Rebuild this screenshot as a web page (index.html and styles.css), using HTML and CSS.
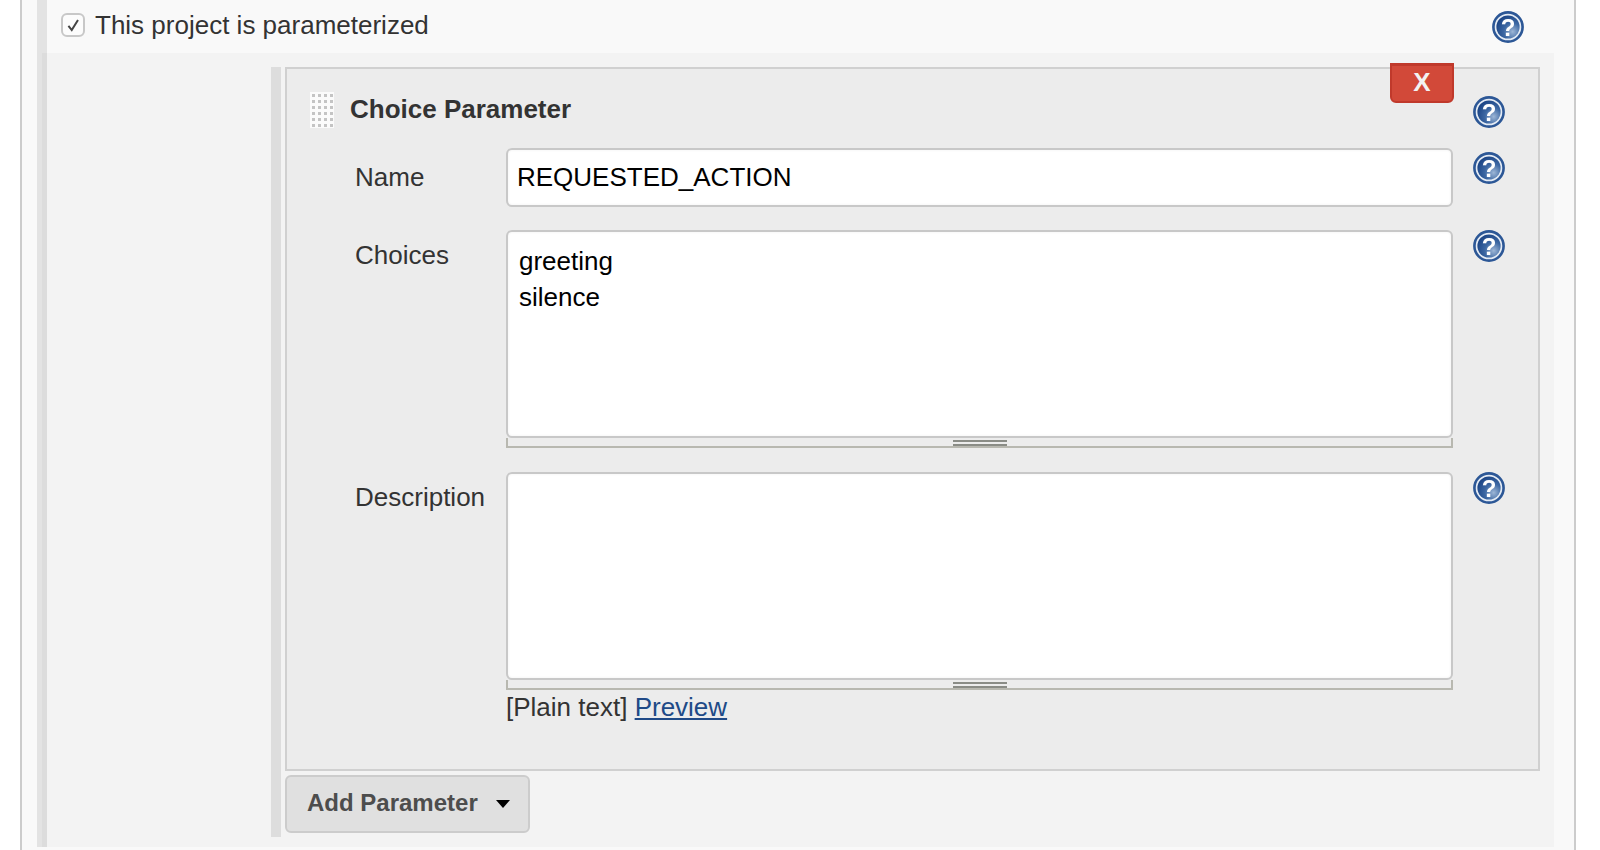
FILE: index.html
```html
<!DOCTYPE html>
<html>
<head>
  <title>Job configuration</title>
  <link rel="stylesheet" href="styles.css">
</head>
<body>
  <svg class="defs" width="0" height="0">
    <defs>
      <radialGradient id="help-fill" cx="0.7" cy="0.7" r="0.75">
        <stop offset="0" stop-color="#9db6d6"/>
        <stop offset="0.5" stop-color="#3d68a3"/>
        <stop offset="1" stop-color="#1c4586"/>
      </radialGradient>
      <symbol id="help" viewBox="0 0 32 32">
        <circle cx="16" cy="16" r="14.6" fill="#e4ebf4" stroke="#2c5796" stroke-width="2.6"/>
        <circle cx="16" cy="16" r="11.6" fill="url(#help-fill)"/>
        <text x="16" y="24.5" text-anchor="middle" class="help-mark">?</text>
      </symbol>
    </defs>
  </svg>

  <div class="page">
    <div class="section">
      <div class="option">
        <label class="option-label">
          <span class="checkbox">
            <svg viewBox="0 0 24 24" width="24" height="24"><path d="M6.5 13 L10.5 18 L18 6" fill="none" stroke="#444" stroke-width="2.4"/></svg>
          </span>
          This project is parameterized
        </label>
        <svg class="help-icon"><use href="#help"/></svg>
      </div>

      <div class="nested">
        <div class="param-list">
          <div class="panel">
            <button class="delete-btn">X</button>

            <div class="panel-head">
              <span class="drag-handle"></span>
              <span class="panel-title">Choice Parameter</span>
              <svg class="help-icon head-help"><use href="#help"/></svg>
            </div>

            <div class="form-row name-row">
              <label class="field-label">Name</label>
              <input class="text-input" type="text" value="REQUESTED_ACTION">
              <svg class="help-icon name-help"><use href="#help"/></svg>
            </div>

            <div class="form-row choices-row">
              <label class="field-label">Choices</label>
              <div class="area-wrap">
                <textarea class="text-area">greeting
silence</textarea>
                <div class="grip"><span class="grip-lines"></span></div>
              </div>
              <svg class="help-icon"><use href="#help"/></svg>
            </div>

            <div class="form-row">
              <label class="field-label">Description</label>
              <div class="area-wrap">
                <textarea class="text-area"></textarea>
                <div class="grip"><span class="grip-lines"></span></div>
                <div class="format-note">[Plain text] <a href="#">Preview</a></div>
              </div>
              <svg class="help-icon"><use href="#help"/></svg>
            </div>
          </div>

          <button class="add-btn">Add Parameter <span class="caret"></span></button>
        </div>
      </div>
    </div>
  </div>
</body>
</html>
```

FILE: styles.css
```css
html, body {
  margin: 0;
  height: 850px;
  overflow: hidden;
  background: #fff;
  font-family: "Liberation Sans", Arial, sans-serif;
  font-size: 26px;
  color: #333;
}
.defs {
  display: block;
  height: 0;
}
.help-mark {
  font-family: "Liberation Sans", Arial, sans-serif;
  font-weight: bold;
  font-size: 24px;
  fill: #fff;
}
.page {
  width: 1537px;
  height: 850px;
  margin-left: 20px;
  padding-left: 15px;
  border-left: 2px solid #ccc;
  border-right: 2px solid #ccc;
  background: #f9f9f9;
}
.section {
  width: 1507px;
  height: 847px;
  border-left: 10px solid #e3e3e3;
}
.option {
  display: flex;
  height: 53px;
  padding-left: 14px;
  padding-right: 30px;
  align-items: center;
  justify-content: space-between;
}
.option-label {
  display: flex;
  align-self: flex-start;
  align-items: center;
  gap: 10px;
  height: 48px;
  padding-top: 1px;
}
.checkbox {
  display: flex;
  box-sizing: border-box;
  width: 24px;
  height: 24px;
  border: 2px solid #c8c8c8;
  border-radius: 6px;
  background: #fcfcfc;
  align-items: center;
  justify-content: center;
}
.help-icon {
  display: block;
  width: 32px;
  height: 32px;
  flex: none;
  filter: blur(0.4px);
}
.nested {
  height: 780px;
  margin-left: -5px;
  padding: 14px 0 0 224px;
  border-left: 5px solid #dcdcdc;
  background: #f3f3f3;
}
.param-list {
  height: 770px;
  padding-left: 4px;
  border-left: 10px solid #ddd;
}
.panel {
  position: relative;
  width: 1251px;
  height: 700px;
  border: 2px solid #d0d0d0;
  background: #ececec;
}
.delete-btn {
  position: absolute;
  top: -6px;
  right: 84px;
  width: 64px;
  height: 40px;
  padding: 0 0 2px;
  border: 2px solid #c0392b;
  border-top-width: 3px;
  border-radius: 0 0 6px 6px;
  background: #d24939;
  color: #f2f2f2;
  font-family: inherit;
  font-size: 26px;
  font-weight: bold;
}
.panel-head {
  display: flex;
  align-items: center;
  height: 36px;
  padding: 23px 33px 20px 23px;
}
.drag-handle {
  width: 24px;
  height: 36px;
  margin-right: 16px;
  background-color: #fbfbfb;
  background-image: conic-gradient(#c4c4c4 25%, transparent 0);
  background-position: -1px 2px;
  background-size: 6px 6px;
}
.panel-title {
  flex: 1;
  padding-bottom: 2px;
  font-weight: bold;
}
.head-help {
  margin-top: 4px;
}
.form-row {
  display: grid;
  grid-template-columns: 151px 947px 32px;
  padding-left: 68px;
  margin-bottom: 24px;
}
.form-row .help-icon {
  margin-left: 20px;
}
.name-row {
  margin-bottom: 23px;
}
.name-help {
  margin-top: 4px;
}
.field-label {
  padding-top: 10px;
  line-height: 30px;
}
.name-row .field-label {
  padding-top: 14px;
}
.text-input {
  box-sizing: border-box;
  width: 947px;
  height: 59px;
  padding: 0 9px;
  border: 2px solid #c8c8c8;
  border-radius: 6px;
  background: #fff;
  box-shadow: inset 0 0 3px rgba(0, 0, 0, 0.06);
  color: #000;
  font-family: inherit;
  font-size: 26px;
}
.text-area {
  display: block;
  box-sizing: border-box;
  width: 947px;
  height: 208px;
  padding: 11px;
  border: 2px solid #c8c8c8;
  border-radius: 6px;
  background: #fff;
  box-shadow: inset 0 0 3px rgba(0, 0, 0, 0.06);
  color: #000;
  font-family: inherit;
  font-size: 26px;
  line-height: 36px;
  resize: none;
  overflow: hidden;
}
.grip {
  display: flex;
  justify-content: center;
  box-sizing: border-box;
  height: 10px;
  padding-top: 2px;
  border: 2px solid #b8b8b0;
  border-top: 0;
}
.grip-lines {
  width: 54px;
  height: 6px;
  border-top: 2px solid #8a8c86;
  border-bottom: 2px solid #8a8c86;
  box-sizing: border-box;
}
.format-note {
  line-height: 30px;
  margin-top: 2px;
}
.format-note a {
  color: #204a87;
}
.add-btn {
  display: flex;
  align-items: center;
  box-sizing: border-box;
  width: 245px;
  height: 58px;
  margin-top: 4px;
  padding: 0 0 2px 20px;
  border: 2px solid #ccc;
  border-radius: 6px;
  background: #e0e0e0;
  color: #4d4d4d;
  font-family: inherit;
  font-size: 24px;
  font-weight: bold;
  white-space: nowrap;
}
.caret {
  width: 0;
  height: 0;
  margin-left: 18px;
  margin-top: 2px;
  border-left: 7px solid transparent;
  border-right: 7px solid transparent;
  border-top: 8px solid #000;
}
```
